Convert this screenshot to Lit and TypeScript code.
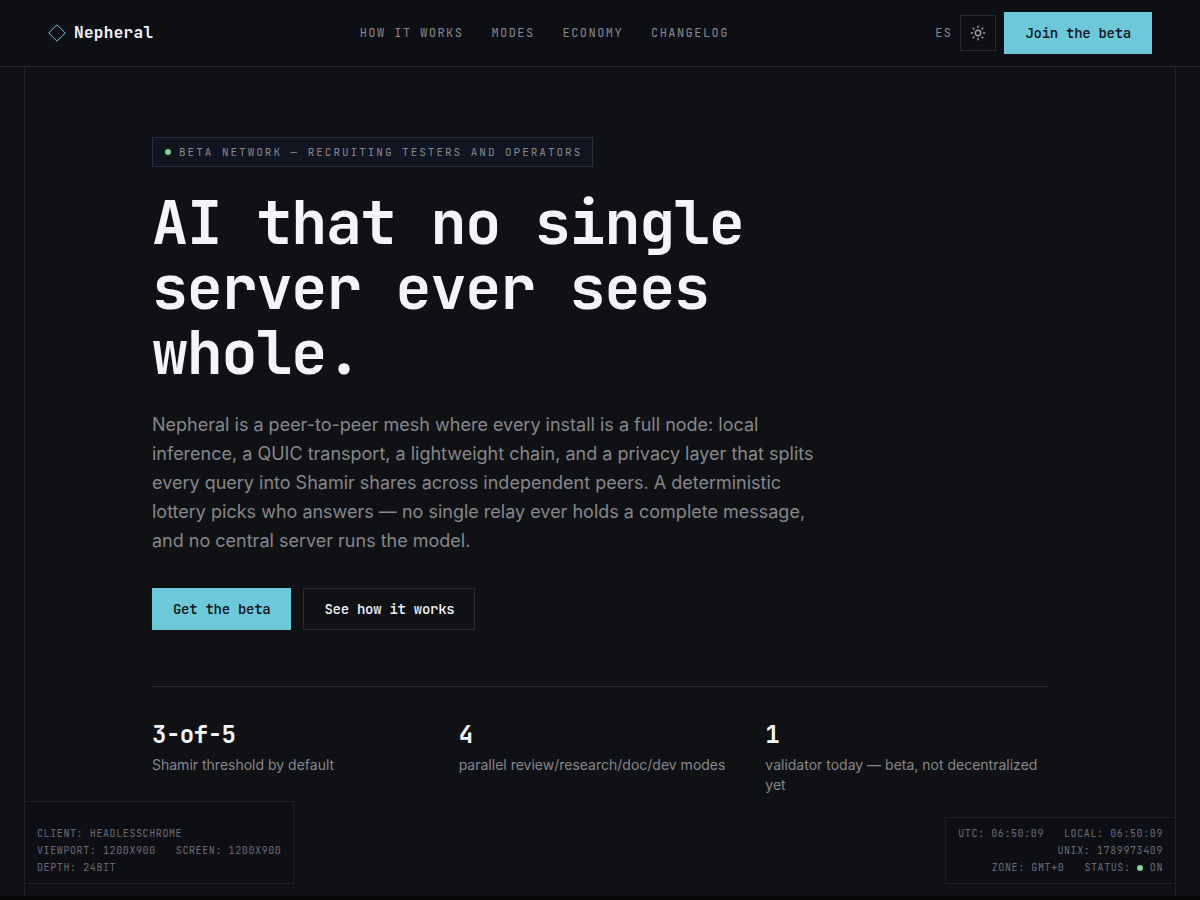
import { LitElement, html, css } from "lit";
import { customElement } from "lit/decorators.js";

const NAV = ["How it works", "Modes", "Economy", "Changelog"];

const STATS = [
  { value: "3-of-5", label: "Shamir threshold by default" },
  { value: "4", label: "parallel review/research/doc/dev modes" },
  { value: "1", label: "validator today — beta, not decentralized yet" },
];

@customElement("app-root")
export class AppRoot extends LitElement {
  static styles = css`
    :host {
      --bg: #101114;
      --panel: #0e0f15;
      --line: #2a2b30;
      --faint: #1f2025;
      --text: #f4f5fa;
      --muted: #86878d;
      --dim: #6b6c75;
      --accent: #6dc8da;
      --ok: #86d19c;
      --mono: "JetBrains Mono", "DejaVu Sans Mono", monospace;
      --sans: Inter, sans-serif;
      display: flex;
      flex-direction: column;
      box-sizing: border-box;
      min-height: 100vh;
      background: var(--bg);
      color: var(--text);
      font-family: var(--sans);
      border-bottom: 4px solid #080509;
    }
    * {
      box-sizing: border-box;
    }
    a {
      color: inherit;
      text-decoration: none;
    }
    .header {
      display: flex;
      align-items: center;
      justify-content: space-between;
      padding: 12px 48px;
      background: var(--panel);
      border-bottom: 1px solid var(--line);
      font-family: var(--mono);
    }
    .brand {
      display: flex;
      align-items: center;
      gap: 8px;
      font-size: 16px;
      line-height: 20px;
      font-weight: 700;
      letter-spacing: 0.02em;
    }
    .mark {
      display: block;
      width: 18px;
      height: 18px;
    }
    .nav {
      display: flex;
      gap: 28px;
    }
    .link {
      font-size: 12px;
      line-height: 16px;
      letter-spacing: 0.12em;
      text-transform: uppercase;
      color: var(--muted);
    }
    .tools {
      display: flex;
      align-items: center;
      gap: 8px;
    }
    .toggle {
      display: grid;
      place-items: center;
      width: 36px;
      height: 36px;
      padding: 0;
      border: 1px solid var(--line);
      background: none;
      color: #a3a4ab;
    }
    .btn {
      display: inline-flex;
      align-items: center;
      height: 42px;
      padding: 0 20px;
      border: 1px solid var(--line);
      font-family: var(--mono);
      font-size: 14px;
      font-weight: 500;
      letter-spacing: -0.02em;
      white-space: nowrap;
    }
    .primary {
      background: var(--accent);
      border-color: var(--accent);
      color: #0c1216;
    }
    .frame {
      flex: 1;
      margin: 0 24px;
      border: solid var(--faint);
      border-width: 0 1px;
      padding: 70px 24px 91px;
    }
    .hero {
      max-width: 896px;
      margin: 0 auto;
    }
    .badge {
      display: inline-flex;
      align-items: center;
      gap: 8px;
      height: 30px;
      padding: 0 10px 0 12px;
      border: 1px solid #25303a;
      background: #10151f;
      color: var(--muted);
      font-family: var(--mono);
      font-size: 11px;
      letter-spacing: 0.18em;
      text-transform: uppercase;
      vertical-align: top;
    }
    .dot {
      display: inline-block;
      width: 6px;
      height: 6px;
      border-radius: 50%;
      background: var(--ok);
    }
    h1 {
      max-width: 660px;
      margin: 23px 0 0;
      font-family: var(--mono);
      font-size: 60px;
      line-height: 65px;
      font-weight: 700;
      letter-spacing: -0.02em;
    }
    .lead {
      max-width: 672px;
      margin: 25px 0 0;
      color: var(--muted);
      font-size: 18px;
      line-height: 29px;
    }
    .actions {
      display: flex;
      gap: 12px;
      margin-top: 33px;
    }
    .stats {
      display: grid;
      grid-template-columns: repeat(3, 1fr);
      gap: 24px;
      margin: 56px 0 0;
      padding-top: 32px;
      border-top: 1px solid var(--line);
    }
    .stat {
      display: flex;
      flex-direction: column-reverse;
      justify-content: flex-end;
      gap: 4px;
    }
    .value {
      margin: 0;
      font-family: var(--mono);
      font-size: 24px;
      line-height: 32px;
      font-weight: 700;
      letter-spacing: -0.02em;
    }
    .label {
      color: var(--muted);
      font-size: 14px;
      line-height: 20px;
    }
    .hud {
      position: fixed;
      bottom: 16px;
      padding: 7px 12px;
      border: 1px solid var(--faint);
      background: var(--panel);
      color: var(--dim);
      font-family: var(--mono);
      font-size: 10px;
      line-height: 17px;
      letter-spacing: 0.06em;
      text-transform: uppercase;
    }
    .row {
      display: flex;
      gap: 20px;
      min-height: 16px;
    }
    .left {
      left: 24px;
    }
    .right {
      right: 24px;
    }
    .right .row {
      justify-content: flex-end;
    }
  `;

  render() {
    return html`
      <header class="header">
        <a class="brand" href="#">
          <svg class="mark" viewBox="0 0 18 18" fill="none" stroke="#6dc8da" aria-hidden="true">
            <path d="M9 .8 17.2 9 9 17.2.8 9Z" />
          </svg>
          Nepheral
        </a>
        <nav class="nav">${NAV.map((n) => html`<a class="link" href="#">${n}</a>`)}</nav>
        <div class="tools">
          <a class="link" href="#">ES</a>
          <button class="toggle" type="button" aria-label="Toggle theme">
            <svg width="16" height="16" viewBox="0 0 16 16" fill="none" stroke="currentColor" stroke-width="1.4" stroke-linecap="round">
              <circle cx="8" cy="8" r="2.7" />
              <path d="M8 1.2v1.2M8 13.6v1.2M3.2 3.2l.8.8M12 12l.8.8M1.2 8h1.2M13.6 8h1.2M4 12l-.8.8M12.8 3.2l-.8.8" />
            </svg>
          </button>
          <a class="btn primary" href="#">Join the beta</a>
        </div>
      </header>
      <main class="frame">
        <section class="hero">
          <div class="badge">
            <span class="dot"></span>
            <span>Beta network — recruiting testers and operators</span>
          </div>
          <h1>AI that no single server ever sees whole.</h1>
          <p class="lead">
            Nepheral is a peer-to-peer mesh where every install is a full node: local inference, a QUIC
            transport, a lightweight chain, and a privacy layer that splits every query into Shamir shares
            across independent peers. A deterministic lottery picks who answers — no single relay ever holds
            a complete message, and no central server runs the model.
          </p>
          <div class="actions">
            <a class="btn primary" href="#">Get the beta</a>
            <a class="btn" href="#">See how it works</a>
          </div>
          <dl class="stats">
            ${STATS.map(
              (s) => html`<div class="stat">
                <dt class="label">${s.label}</dt>
                <dd class="value">${s.value}</dd>
              </div>`
            )}
          </dl>
        </section>
      </main>
      <aside class="hud left">
        <div class="row"></div>
        <div class="row"><span>Client: HeadlessChrome</span></div>
        <div class="row"><span>Viewport: 1200x900</span><span>Screen: 1200x900</span></div>
        <div class="row"><span>Depth: 24bit</span></div>
      </aside>
      <aside class="hud right">
        <div class="row"><span>UTC: 06:50:09</span><span>Local: 06:50:09</span></div>
        <div class="row"><span>Unix: 1789973409</span></div>
        <div class="row"><span>Zone: GMT+0</span><span>Status: <i class="dot"></i> On</span></div>
      </aside>
    `;
  }
}
